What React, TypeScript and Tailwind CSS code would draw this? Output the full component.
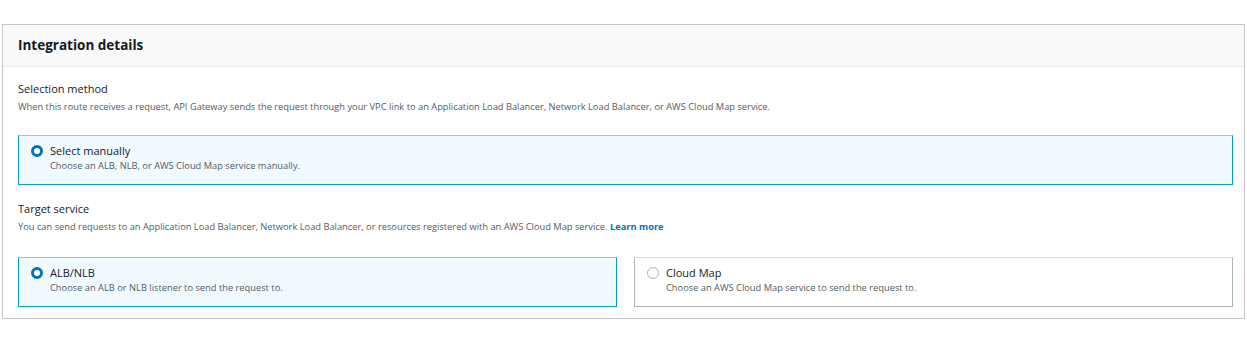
import React, { useState } from "react";

type Option = {
  id: string;
  title: string;
  description: string;
};

const Radio: React.FC<{ checked: boolean }> = ({ checked }) =>
  checked ? (
    <span className="mt-[2px] block h-[12px] w-[12px] shrink-0 rounded-full border-[3.5px] border-[#0073bb] bg-white" />
  ) : (
    <span className="mt-[2px] block h-[12px] w-[12px] shrink-0 rounded-full border border-[#aab7b8] bg-white" />
  );

const Tile: React.FC<{
  option: Option;
  checked: boolean;
  onSelect: () => void;
}> = ({ option, checked, onSelect }) => (
  <div
    onClick={onSelect}
    className={
      checked
        ? "flex cursor-pointer gap-[7px] border border-[#00a1c9] border-t-[#7fd2e8] bg-[#f1faff] pl-[12px] pt-[7px] pb-[11px]"
        : "flex cursor-pointer gap-[7px] border border-[#aab7b8] border-t-[#d5dbdb] bg-white pl-[12px] pt-[7px] pb-[11px]"
    }
  >
    <Radio checked={checked} />
    <div>
      <div className="text-[11px] leading-[16px] text-[#16191f]">
        {option.title}
      </div>
      <div className="text-[9.3px] leading-[14px] text-[#545b64]">
        {option.description}
      </div>
    </div>
  </div>
);

export default function App() {
  const [method, setMethod] = useState("manual");
  const [target, setTarget] = useState("alb");

  return (
    <div
      className="bg-white pt-[24px] pl-[2px]"
      style={{ fontFamily: '"Open Sans", "Noto Sans", sans-serif' }}
    >
      <div className="w-[1243px] border border-[#c6c6c6]">
        <div className="flex h-[42px] items-center border-b border-[#eaeded] bg-[#f9f9f9] pl-[15px]">
          <h2 className="text-[13.5px] font-bold text-[#16191f]">
            Integration details
          </h2>
        </div>
        <div className="pl-[15px] pr-[11px] pt-[14px] pb-[11px]">
          <div className="text-[11px] leading-[16px] text-[#16191f]">
            Selection method
          </div>
          <div className="mt-[3px] text-[9.3px] leading-[14px] text-[#545b64]">
            When this route receives a request, API Gateway sends the request
            through your VPC link to an Application Load Balancer, Network Load
            Balancer, or AWS Cloud Map service.
          </div>
          <div className="mt-[21px]">
            <Tile
              option={{
                id: "manual",
                title: "Select manually",
                description:
                  "Choose an ALB, NLB, or AWS Cloud Map service manually.",
              }}
              checked={method === "manual"}
              onSelect={() => setMethod("manual")}
            />
          </div>

          <div className="mt-[16px] text-[11px] leading-[16px] text-[#16191f]">
            Target service
          </div>
          <div className="mt-[3px] text-[9.3px] leading-[14px] text-[#545b64]">
            You can send requests to an Application Load Balancer, Network Load
            Balancer, or resources registered with an AWS Cloud Map service.{" "}
            <a href="#" className="font-bold text-[#0073bb]">
              Learn more
            </a>
          </div>
          <div className="mt-[23px] grid grid-cols-2 gap-[17px]">
            {[
              {
                id: "alb",
                title: "ALB/NLB",
                description: "Choose an ALB or NLB listener to send the request to.",
              },
              {
                id: "cloudmap",
                title: "Cloud Map",
                description:
                  "Choose an AWS Cloud Map service to send the request to.",
              },
            ].map((opt) => (
              <Tile
                key={opt.id}
                option={opt}
                checked={target === opt.id}
                onSelect={() => setTarget(opt.id)}
              />
            ))}
          </div>
        </div>
      </div>
    </div>
  );
}
